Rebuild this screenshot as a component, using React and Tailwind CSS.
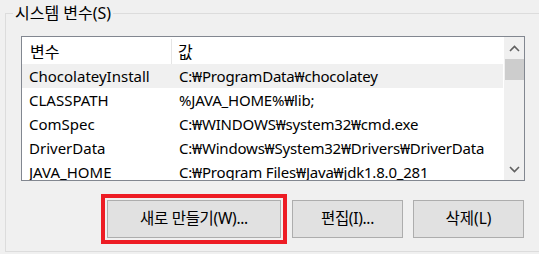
const ROWS = [
  { name: "ChocolateyInstall", value: "C:₩ProgramData₩chocolatey" },
  { name: "CLASSPATH", value: "%JAVA_HOME%₩lib;" },
  { name: "ComSpec", value: "C:₩WINDOWS₩system32₩cmd.exe" },
  { name: "DriverData", value: "C:₩Windows₩System32₩Drivers₩DriverData" },
  { name: "JAVA_HOME", value: "C:₩Program Files₩Java₩jdk1.8.0_281" },
];

const FONT = "font-['Segoe_UI','Noto_Sans','Noto_Sans_CJK_KR',sans-serif]";

function Chevron({ up }) {
  return (
    <svg width="11" height="7" viewBox="0 0 11 7" fill="none">
      <path
        d={up ? "M1 6 L5.5 1.5 L10 6" : "M1 1 L5.5 5.5 L10 1"}
        stroke="#606060"
        strokeWidth="1.6"
      />
    </svg>
  );
}

export default function App() {
  return (
    <div className={`w-[539px] h-[254px] overflow-hidden bg-[#f0f0f0] text-[15px] text-black ${FONT}`}>
      <div className="pt-[13px] pl-[5px]">
        <div className="relative w-[560px] h-[239px] border border-[#dcdcdc] pl-[15px] pt-[22px]">
          <span className="absolute -top-[12px] left-[7px] bg-[#f0f0f0] px-[2px] leading-[22px] text-[16px]">
            시스템 변수(S)
          </span>

          <div className="w-[504px] h-[145px] border border-[#828790] bg-white flex overflow-hidden">
            <div className="flex-1 flex flex-col">
              <div className="flex h-[27px] shrink-0 text-[16px] pt-[2px]">
                <div className="w-[150px] border-r border-[#e5e5e5] pl-[8px] flex items-center">변수</div>
                <div className="flex-1 pl-[6px] flex items-center">값</div>
              </div>
              {ROWS.map((r, i) => (
                <div
                  key={r.name}
                  className={`flex h-[24px] shrink-0 items-center ${i === 0 ? "bg-[#f0f0f0]" : ""}`}
                >
                  <div className="w-[157px] pl-[7px] whitespace-nowrap">{r.name}</div>
                  <div className="flex-1 whitespace-nowrap tracking-[-0.2px]">{r.value}</div>
                </div>
              ))}
            </div>
            <div className="w-[21px] bg-[#f0f0f0] flex flex-col items-center border-l border-white">
              <div className="h-[22px] w-full flex items-center justify-center">
                <Chevron up />
              </div>
              <div className="w-[19px] h-[21px] bg-[#cdcdcd]" />
              <div className="flex-1" />
              <div className="h-[22px] w-full flex items-center justify-center">
                <Chevron />
              </div>
            </div>
          </div>

          <div className="flex pl-[86px] pt-[19px] gap-[11px] text-[15.5px]">
            <button className="w-[174px] h-[38px] bg-[#e1e1e1] border border-[#adadad] outline-4 outline-offset-2 outline-[#ed1c24] tracking-[-0.3px]">
              새로 만들기(W)...
            </button>
            <button className="w-[111px] h-[38px] bg-[#e1e1e1] border border-[#adadad] tracking-[-0.3px]">편집(I)...</button>
            <button className="w-[111px] h-[38px] bg-[#e1e1e1] border border-[#adadad] ml-[-1px]">삭제(L)</button>
          </div>
        </div>
      </div>
    </div>
  );
}
